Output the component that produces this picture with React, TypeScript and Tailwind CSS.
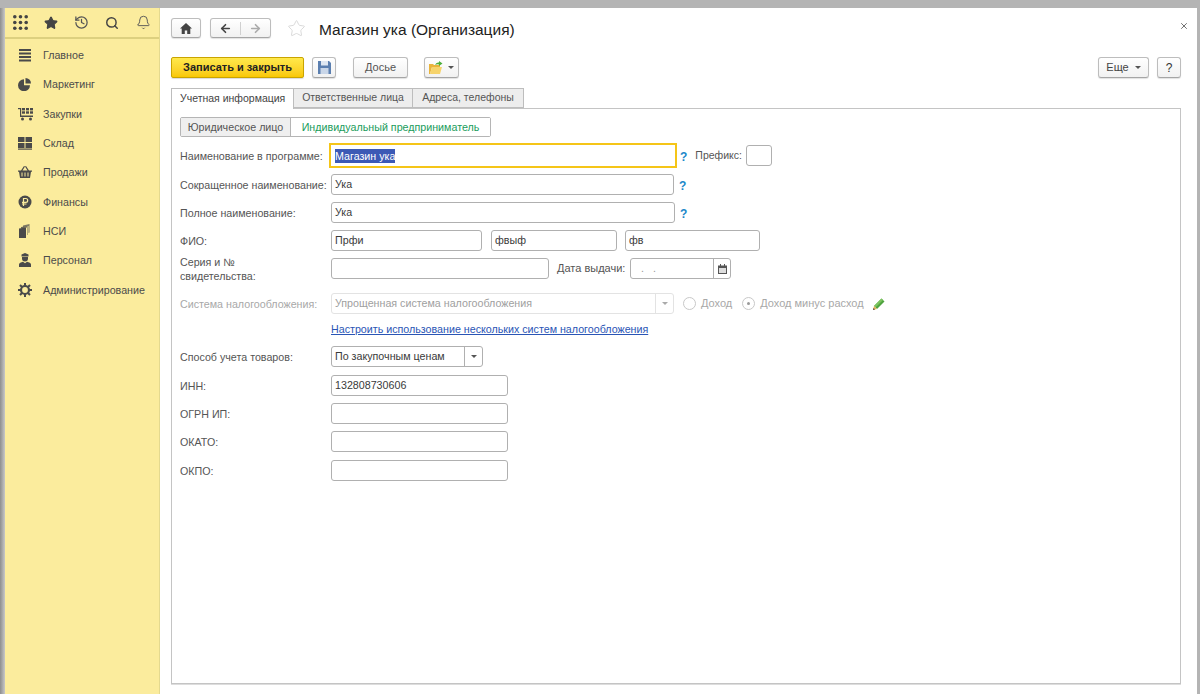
import React from 'react';
import { Star, History, Search, Bell, ArrowLeft, ArrowRight, X } from 'lucide-react';

const menuItems = ['Главное', 'Маркетинг', 'Закупки', 'Склад', 'Продажи', 'Финансы', 'НСИ', 'Персонал', 'Администрирование'];

const MenuIcon: React.FC<{ index: number }> = ({ index }) => {
    const fill = '#4a4a4a';
    switch (index) {
        case 0:
            return (
                <svg width="14" height="14" viewBox="0 0 14 14" fill={fill}>
                    <rect x="1" y="1" width="12" height="2" /><rect x="1" y="4.5" width="12" height="2" />
                    <rect x="1" y="8" width="12" height="2" /><rect x="1" y="11.5" width="12" height="2" />
                </svg>
            );
        case 1:
            return (
                <svg width="14" height="14" viewBox="0 0 14 14" fill={fill}>
                    <path d="M6 2.2v6h6a6 6 0 1 1-6-6z" />
                    <path d="M7.5 1a5.5 5.5 0 0 1 5.5 5.5H7.5z" />
                </svg>
            );
        case 2:
            return (
                <svg width="15" height="14" viewBox="0 0 15 14" fill={fill}>
                    <rect x="0" y="1" width="2.5" height="1.2" /><rect x="2" y="1" width="1.2" height="9" />
                    <rect x="4" y="1" width="3" height="2.4" /><rect x="8" y="1" width="3" height="2.4" /><rect x="12" y="1" width="3" height="2.4" />
                    <rect x="4" y="4.3" width="3" height="2.4" /><rect x="8" y="4.3" width="3" height="2.4" /><rect x="12" y="4.3" width="3" height="2.4" />
                    <rect x="2" y="8.5" width="13" height="1.5" />
                    <circle cx="4.5" cy="12" r="1.5" /><circle cx="12.5" cy="12" r="1.5" />
                </svg>
            );
        case 3:
            return (
                <svg width="14" height="14" viewBox="0 0 14 14" fill={fill}>
                    <rect x="0" y="1" width="6.5" height="5" /><rect x="7.5" y="1" width="6.5" height="5" />
                    <rect x="0" y="7" width="6.5" height="5" /><rect x="7.5" y="7" width="6.5" height="5" />
                    <rect x="0" y="12.5" width="14" height="1.2" />
                </svg>
            );
        case 4:
            return (
                <svg width="14" height="14" viewBox="0 0 14 14" fill={fill}>
                    <path d="M3 5.5 6 1l1 .6L4.5 5.5h5L7 1.6 8 1l3 4.5h3v1.3h-1L12 13H2L1 6.800H0V5.500z" />
                    <path d="M4 7.500v4M7 7.500v4M10 7.500v4" stroke="#fbec9d" strokeWidth="1" />
                </svg>
            );
        case 5:
            return (
                <svg width="14" height="14" viewBox="0 0 14 14">
                    <circle cx="7" cy="7" r="6.500" fill={fill} />
                    <path d="M5.500 11V3.500h2.300a1.900 1.900 0 0 1 0 3.800H4M4 9h4.500" stroke="#fbec9d" strokeWidth="1.200" fill="none" />
                </svg>
            );
        case 6:
            return (
                <svg width="14" height="14" viewBox="0 0 14 14" fill={fill}>
                    <path d="M5 1.500 11.500 0v8.500l-1 .5V2L5 3z" opacity="0.7" />
                    <path d="M3 3 9.500 2v9H9V3.500L3 4.500z" opacity="0.8" />
                    <path d="M1 4.500 8 3.500V14H1z" />
                </svg>
            );
        case 7:
            return (
                <svg width="14" height="14" viewBox="0 0 14 14" fill={fill}>
                    <path d="M3.500 1.500 7 0l3.500 1.500v2h-7z" />
                    <path d="M4 4h6v1.500a3 3 0 0 1-6 0z" />
                    <path d="M1 14v-2.500C1 10 3 9.200 5 8.800l2 1.400 2-1.400c2 .4 4 1.200 4 2.700V14z" />
                </svg>
            );
        default:
            return (
                <svg width="14" height="14" viewBox="0 0 14 14">
                    <circle cx="7" cy="7" r="4" fill="none" stroke={fill} strokeWidth="2.200" />
                    <path d="M7 0v3M7 11v3M0 7h3M11 7h3M2 2l2 2M10 10l2 2M12 2l-2 2M4 10l-2 2" stroke={fill} strokeWidth="2" />
                </svg>
            );
    }
};

const Sidebar: React.FC = () => (
    <aside className="w-[155px] shrink-0 bg-[#fbec9d] border-r border-[#e4d98f]">
        <div className="h-[31px] flex items-center border-b-2 border-[#ddd07f]">
            <svg width="15" height="15" viewBox="0 0 15 15" fill="#444" className="ml-[8px]">
                {[1.8, 7.5, 13.2].map((cy) =>
                    [1.8, 7.500, 13.2].map((cx) => <circle key={`${cx}-${cy}`} cx={cx} cy={cy} r="1.800" />),
                )}
            </svg>
            <Star size={14} fill="#444" color="#444" className="ml-[16px]" />
            <History size={15} color="#555" strokeWidth={2} className="ml-[16px]" />
            <Search size={14} color="#444" strokeWidth={2.5} className="ml-[16px]" />
            <Bell size={15} color="#555" strokeWidth={1.500} className="ml-[17px]" />
        </div>
        <nav className="pt-[1.500px]">
            {menuItems.map((item, i) => (
                <div key={item} className="h-[29.300px] flex items-center text-[10.700px] text-[#4b4b4b]">
                    <span className="w-[38px] pl-[13px] shrink-0 flex"><MenuIcon index={i} /></span>
                    <span>{item}</span>
                </div>
            ))}
        </nav>
    </aside>
);

const btn = 'h-[21px] flex items-center justify-center rounded-[3px] border border-[#bdbdbd] border-b-[#a5a5a5] bg-gradient-to-b from-white to-[#f1f1f1] shadow-[0_1px_1px_rgba(0,0,0,0.12)]';
const field = 'h-[21px] flex items-center rounded-[3px] border border-[#b0b0b0] bg-white px-[3px] text-[10.700px] text-[#3a3a3a]';

const Caret: React.FC<{ color?: string }> = ({ color = '#555' }) => (
    <span className="block w-0 h-0 border-x-[3px] border-x-transparent border-t-[3px]" style={{ borderTopColor: color }} />
);

const Hint: React.FC = () => <span className="text-[#1b87c9] font-bold text-[12px] leading-none">?</span>;

const Label: React.FC<{ children: React.ReactNode; muted?: boolean; wrap?: boolean }> = ({ children, muted, wrap }) => (
    <span className={`w-[151px] shrink-0 text-[10.700px] leading-[14px] ${wrap ? '' : 'whitespace-nowrap'} ${muted ? 'text-[#a8a8a8]' : 'text-[#555]'}`}>{children}</span>
);

const Radio: React.FC<{ checked?: boolean }> = ({ checked }) => (
    <span className="w-[13px] h-[13px] rounded-full border border-[#c8c8c8] bg-white flex items-center justify-center shrink-0">
        {checked && <span className="w-[3px] h-[3px] rounded-full bg-[#9a9a9a]" />}
    </span>
);

const Row: React.FC<{ label: React.ReactNode; muted?: boolean; wrap?: boolean; className?: string; children?: React.ReactNode }> = ({ label, muted, wrap, className = 'mt-[7px]', children }) => (
    <div className={`flex items-center h-[21px] ${className}`}>
        <Label muted={muted} wrap={wrap}>{label}</Label>
        {children}
    </div>
);

const Form: React.FC = () => (
    <div className="pl-[8px]">
        <div className="flex items-center h-[25px] mt-[6px]">
            <Label>Наименование в программе:</Label>
            <div className="w-[348px] h-[25px] -ml-[2px] border-2 border-[#f5c518] flex items-center px-[4px] text-[10.700px] text-[#3a3a3a]">
                <span className="bg-[#3c59b5] text-white leading-[14px]">Магазин ука</span>
            </div>
            <span className="ml-[3px]"><Hint /></span>
            <span className="ml-[8px] text-[10.500px] text-[#555]">Префикс:</span>
            <div className={`${field} w-[26px] ml-[4px]`} />
        </div>
        <Row label="Сокращенное наименование:" className="mt-[6px]">
            <div className={`${field} w-[343px]`}>Ука</div>
            <span className="ml-[5px]"><Hint /></span>
        </Row>
        <Row label="Полное наименование:" className="mt-[7px]">
            <div className={`${field} w-[344px]`}>Ука</div>
            <span className="ml-[5px]"><Hint /></span>
        </Row>
        <Row label="ФИО:" className="mt-[7px]">
            <div className={`${field} w-[151px]`}>Прфи</div>
            <div className={`${field} w-[126px] ml-[9px]`}>фвыф</div>
            <div className={`${field} w-[135px] ml-[8px]`}>фв</div>
        </Row>
        <Row wrap label={<>Серия и №<br />свидетельства:</>}>
            <div className={`${field} w-[218px]`} />
            <span className="ml-[8px] w-[73px] text-[11px] text-[#555]">Дата выдачи:</span>
            <div className={`${field} w-[101px] !px-0`}>
                <span className="flex-1 pl-[10px] text-[#999] whitespace-pre">.   .</span>
                <span className="w-[17px] h-full border-l border-[#b0b0b0] flex items-center justify-center">
                    <svg width="9" height="10" viewBox="0 0 9 10" fill="#555">
                        <path d="M0 1.500h2V0h1v1.500h3V0h1v1.500h2V10H0z" /><rect x="1" y="4" width="7" height="5" fill="#ddd" />
                    </svg>
                </span>
            </div>
        </Row>
        <Row label="Система налогообложения:" muted className="mt-[14px]">
            <div className="h-[21px] w-[343px] flex items-center rounded-[3px] border border-[#e3e3e3] text-[10.700px] text-[#a0a0a0]">
                <span className="flex-1 pl-[3px]">Упрощенная система налогообложения</span>
                <span className="w-[18px] h-full border-l border-[#e3e3e3] flex items-center justify-center"><Caret color="#aaa" /></span>
            </div>
            <span className="ml-[9px]"><Radio /></span>
            <span className="ml-[5px] text-[11px] text-[#a8a8a8]">Доход</span>
            <span className="ml-[10px]"><Radio checked /></span>
            <span className="ml-[5px] text-[11px] text-[#a8a8a8]">Доход минус расход</span>
            <svg width="12" height="12" viewBox="0 0 12 12" className="ml-[9px]">
                <path d="M8.500 .5 11.500 3.500 4 11 1 8z" fill="#4fa33f" />
                <path d="M8.500 .5 10 2 2.500 9.500 1 8z" fill="#7cc45f" />
                <path d="M1 8 0 12 4 11z" fill="#e8b25a" />
                <path d="M.5 10 0 12l2-.5z" fill="#444" />
            </svg>
        </Row>
        <div className="mt-[8px] h-[14px] pl-[151px] text-[10.700px] leading-[14px]">
            <span className="text-[#2a55b5] underline">Настроить использование нескольких систем налогообложения</span>
        </div>
        <Row label="Способ учета товаров:" className="mt-[10px]">
            <div className={`${field} w-[152px] !pr-0`}>
                <span className="flex-1">По закупочным ценам</span>
                <span className="w-[18px] h-full border-l border-[#b0b0b0] flex items-center justify-center"><Caret /></span>
            </div>
        </Row>
        <Row label="ИНН:" className="mt-[8px]">
            <div className={`${field} w-[177px]`}>132808730606</div>
        </Row>
        <Row label="ОГРН ИП:" className="mt-[7px]"><div className={`${field} w-[177px]`} /></Row>
        <Row label="ОКАТО:" className="mt-[7px]"><div className={`${field} w-[177px]`} /></Row>
        <Row label="ОКПО:" className="mt-[8px]"><div className={`${field} w-[177px]`} /></Row>
    </div>
);

const App: React.FC = () => (
    <div className="w-[1200px] h-[694px] overflow-hidden bg-white flex flex-col font-['Liberation_Sans',Arial,sans-serif]">
        <div className="h-[8px] shrink-0 bg-[#b4b4b4]" />
        <div className="flex-1 flex min-h-0">
            <div className="w-[5px] shrink-0 bg-gradient-to-r from-[#8e8e8e] to-[#c8c8c8]" />
            <Sidebar />
            <main className="flex-1 min-w-0 pl-[11px] pr-[16px] pt-[10px] flex flex-col">
                <div className="flex items-center h-[20px]">
                    <button className={`${btn} !h-[20px] w-[30px]`}>
                        <svg width="12" height="11" viewBox="0 0 12 11" fill="#444">
                            <path d="M6 0 12 5.500H10.300V11H7.200V7.500H4.800V11H1.700V5.500H0z" />
                        </svg>
                    </button>
                    <div className={`${btn} !h-[20px] w-[61px] ml-[9px]`}>
                        <span className="flex-1 flex justify-center border-r border-[#d0d0d0]"><ArrowLeft size={13} color="#444" strokeWidth={3} /></span>
                        <span className="flex-1 flex justify-center"><ArrowRight size={13} color="#aaa" strokeWidth={3} /></span>
                    </div>
                    <Star size={19} color="#d8d8d8" strokeWidth={1.200} className="ml-[16px]" />
                    <h1 className="ml-[13px] pt-[4px] text-[15.500px] text-[#222] leading-[20px]">Магазин ука (Организация)</h1>
                    <X size={10} color="#555" className="ml-auto -mr-[8px] mb-[4px]" />
                </div>
                <div className="flex items-center mt-[19px] text-[11px]">
                    <button className="h-[21px] w-[133px] rounded-[2px] border border-[#c9a400] bg-gradient-to-b from-[#ffe94a] to-[#f9c800] font-bold text-[#222] shadow-[0_1px_1px_rgba(0,0,0,0.15)]">Записать и закрыть</button>
                    <button className={`${btn} w-[24px] ml-[8px]`}>
                        <svg width="13" height="13" viewBox="0 0 13 13">
                            <path d="M0 0h11l2 2v11H0z" fill="#5b7fb0" />
                            <rect x="3" y="0" width="7" height="4.500" fill="#dfe7f2" />
                            <rect x="2.500" y="7" width="8" height="6" fill="#c9d6e8" />
                        </svg>
                    </button>
                    <button className={`${btn} w-[55px] ml-[17px] text-[#555]`}>Досье</button>
                    <button className={`${btn} w-[35px] ml-[16px] gap-[5px]`}>
                        <svg width="14" height="14" viewBox="0 0 14 14">
                            <path d="M0 3h4l1 1h6v2H3L1 13H0z" fill="#e9b43c" />
                            <path d="M3 6h10l-2 7H1z" fill="#f6d36b" />
                            <path d="M6 4 Q7 1 10 1.500V0l3.500 2.500L10 5V3.500Q8 3 6 4z" fill="#4caf3c" />
                        </svg>
                        <Caret />
                    </button>
                    <button className={`${btn} w-[51px] ml-auto gap-[6px] text-[#444]`}>Еще <Caret /></button>
                    <button className={`${btn} w-[24px] ml-[8px] text-[12px] text-[#333]`}>?</button>
                </div>
                <div className="flex mt-[10px] h-[21px] text-[10.500px] relative z-10">
                    <div className="w-[123px] h-[21px] pl-[8px] flex items-center border border-b-0 border-[#bdbdbd] bg-white text-[#444]">Учетная информация</div>
                    <div className="w-[119px] h-[20px] flex items-center justify-center border border-l-0 border-[#bdbdbd] bg-[#ededed] text-[#555]">Ответственные лица</div>
                    <div className="w-[111px] h-[20px] flex items-center justify-center border border-l-0 border-[#bdbdbd] bg-[#ededed] text-[#555]">Адреса, телефоны</div>
                </div>
                <section className="h-[576px] -mt-px border border-[#c4c4c4] shadow-[0_1px_0_#ddd]">
                    <div className="ml-[8px] mt-[8px] flex w-fit h-[20px] text-[10.700px] rounded-[2px] border border-[#b5b5b5]">
                        <div className="w-[110px] flex items-center justify-center bg-[#efefef] text-[#555] border-r border-[#b5b5b5]">Юридическое лицо</div>
                        <div className="w-[199px] flex items-center justify-center bg-white text-[#1a9c5c]">Индивидуальный предприниматель</div>
                    </div>
                    <Form />
                </section>
            </main>
            <div className="w-[3px] shrink-0 bg-[#b4b4b4]" />
        </div>
    </div>
);

export default App;
